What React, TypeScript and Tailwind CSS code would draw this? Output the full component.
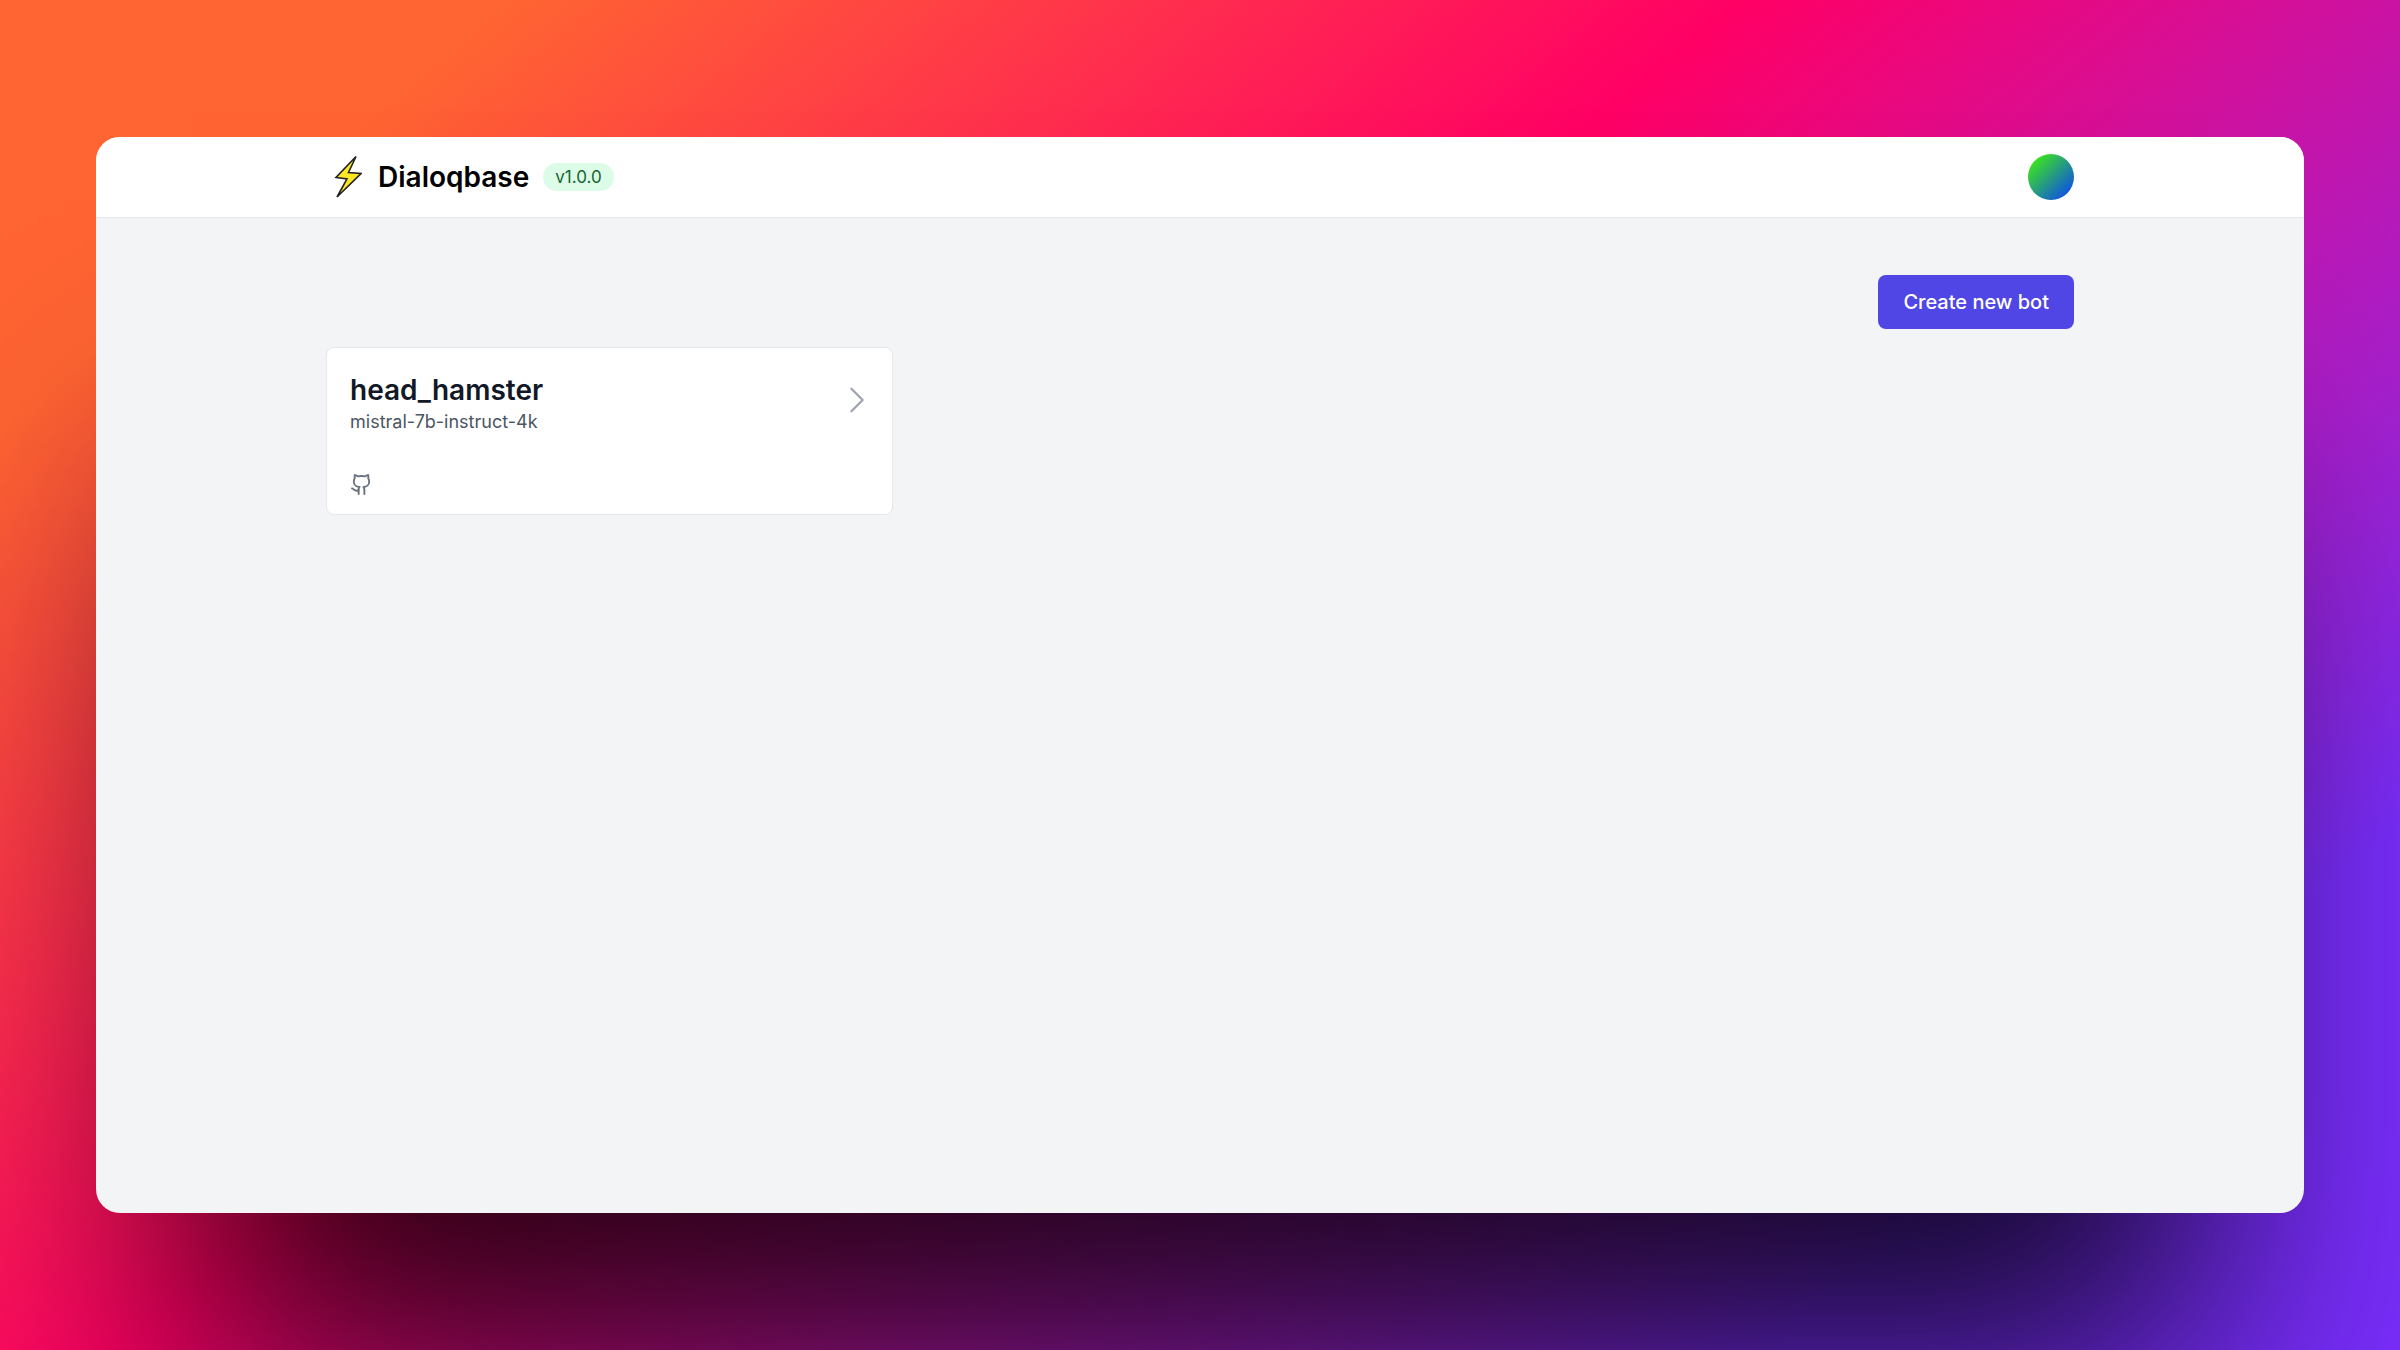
import React from "react";

type Bot = { name: string; model: string };

const bots: Bot[] = [{ name: "head_hamster", model: "mistral-7b-instruct-4k" }];

function BoltLogo() {
  return (
    <svg viewBox="0 0 28 44" className="h-11 w-7" aria-hidden="true">
      <path
        d="M22 1.5 L2 22.5 L13 24 L3 42 L27 18.5 L14.5 17.5 Z"
        fill="#fde725"
        stroke="#222"
        strokeWidth="1.6"
        strokeLinejoin="miter"
      />
    </svg>
  );
}

function GithubIcon() {
  return (
    <svg
      viewBox="0 0 24 24"
      className="size-[23px]"
      fill="none"
      stroke="currentColor"
      strokeWidth="2"
      strokeLinecap="round"
      strokeLinejoin="round"
      aria-hidden="true"
    >
      <path d="M15 22v-4a4.8 4.8 0 0 0-1-3.5c3 0 6-2 6-5.5.08-1.25-.27-2.48-1-3.5.28-1.15.28-2.35 0-3.5 0 0-1 0-3 1.5-2.64-.5-5.36-.5-8 0C6 2 5 2 5 2c-.3 1.15-.3 2.35 0 3.5A5.403 5.403 0 0 0 4 9c0 3.5 3 5.5 6 5.5-.39.49-.68 1.05-.85 1.65-.17.6-.22 1.23-.15 1.85v4" />
      <path d="M9 18c-4.51 2-5-2-7-2" />
    </svg>
  );
}

function ChevronRight() {
  return (
    <svg viewBox="0 0 24 24" className="size-9" fill="none" stroke="currentColor" strokeWidth="1.5" strokeLinecap="round" strokeLinejoin="round" aria-hidden="true">
      <path d="M8.25 4.5l7.5 7.5-7.5 7.5" />
    </svg>
  );
}

function BotCard({ name, model }: Bot) {
  return (
    <a href="#bot" className="flex flex-col gap-[37px] rounded-lg border border-[#e5e7eb] bg-white pt-6 pr-[17px] pb-[18px] pl-[23px]">
      <div className="flex items-start justify-between">
        <div>
          <h3 className="text-[28px] leading-9 font-semibold text-[#111827]">{name}</h3>
          <p className="text-lg leading-7 text-[#4b5563]">{model}</p>
        </div>
        <span className="pt-2.5 text-[#9ca3af]">
          <ChevronRight />
        </span>
      </div>
      <div className="text-[#6b7280]">
        <GithubIcon />
      </div>
    </a>
  );
}

export default function App() {
  return (
    <div className="flex min-h-screen flex-col bg-[linear-gradient(140deg,#ff6432_12.8%,#ff0065_43.52%,#7b2eff_84.34%)] px-[4%] py-[137px] font-['Inter',sans-serif]">
      <div className="flex flex-1 flex-col overflow-hidden rounded-3xl bg-[#f3f4f6] shadow-[0_260px_260px_-96px_rgba(0,0,0,0.84)]">
        <header className="border-b border-[#e5e7eb] bg-white">
          <div className="mx-auto flex h-20 max-w-[1748px] items-center justify-between">
            <a href="#home" className="flex items-center pl-2">
              <BoltLogo />
              <span className="ml-4 text-[28px] leading-9 font-semibold text-black">Dialoqbase</span>
              <span className="ml-3.5 rounded-full bg-[#dcfce7] px-3 py-0.5 text-[17px] leading-6 text-[#166534]">v1.0.0</span>
            </a>
            <button type="button" aria-label="Open user menu" className="size-[46px] rounded-full bg-[linear-gradient(135deg,#3ee817_10%,#0d4fe8_90%)]" />
          </div>
        </header>
        <main className="mx-auto w-full max-w-[1748px] pt-[57px]">
          <div className="flex justify-end">
            <button type="button" className="rounded-lg bg-[#4f46e5] px-[25px] py-[13px] text-[20px] leading-7 font-medium text-white">
              Create new bot
            </button>
          </div>
          <div className="mt-[18px] grid grid-cols-3 gap-6">
            {bots.map((bot) => (
              <BotCard key={bot.name} {...bot} />
            ))}
          </div>
        </main>
      </div>
    </div>
  );
}
